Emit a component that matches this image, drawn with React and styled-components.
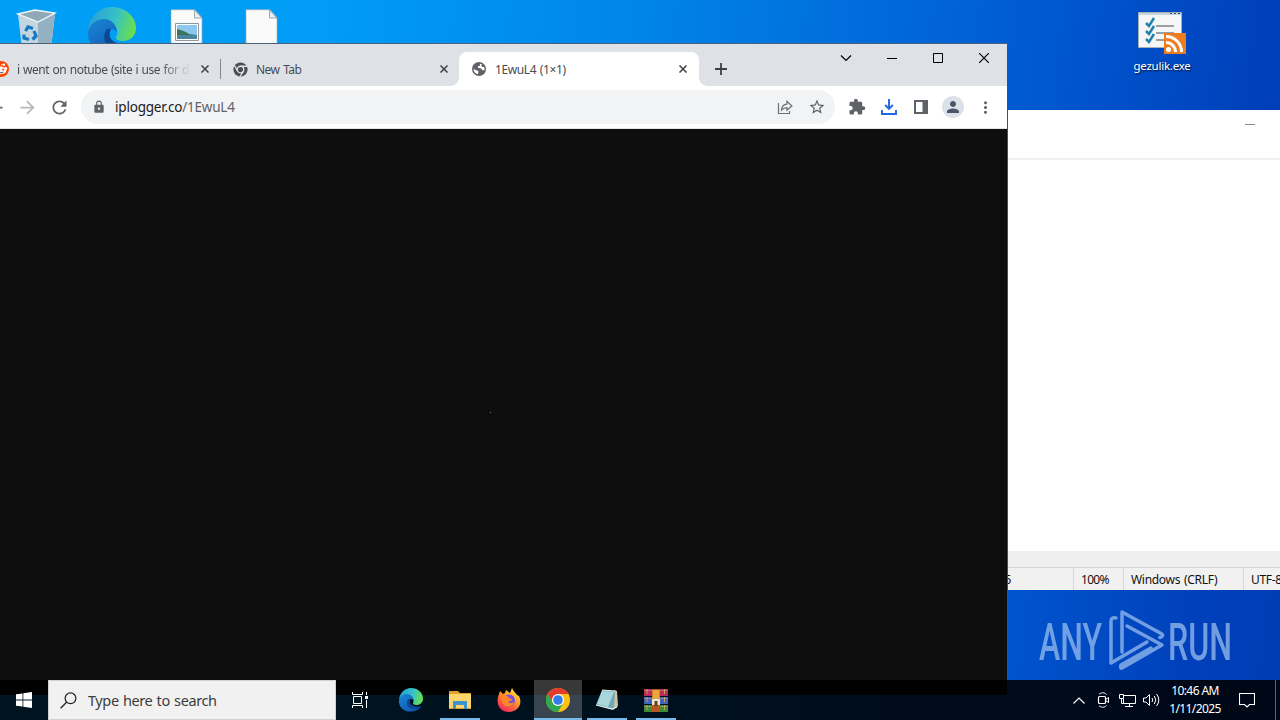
import React from 'react';
import styled, { createGlobalStyle } from 'styled-components';
import {
  MdArrowBack,
  MdArrowForward,
  MdExtension,
  MdLock,
  MdMoreVert,
  MdPerson,
  MdRefresh,
  MdStarBorder,
} from 'react-icons/md';

const uiFont = '"Noto Sans", "Open Sans", sans-serif';

const colors = {
  frame: '#dee1e6',
  toolbar: '#ffffff',
  omnibox: '#f1f3f4',
  icon: '#5f6368',
  text: '#484c51',
};

function App() {
  return (
    <>
      <GlobalStyle />
      <Desktop>
        <DesktopIcon $left={16}>
          <RecycleBinIcon />
        </DesktopIcon>
        <DesktopIcon $left={88} $top={7}>
          <EdgeIcon id="edge-desktop" size={48} />
        </DesktopIcon>
        <DesktopIcon $left={170}>
          <FileIcon hasImage />
        </DesktopIcon>
        <DesktopIcon $left={245}>
          <FileIcon />
        </DesktopIcon>
        <DesktopIcon $left={1122} $width={80}>
          <InstallerIcon />
          <DesktopLabel>gezulik.exe</DesktopLabel>
        </DesktopIcon>
        <Watermark>
          <AnyRunLogo />
        </Watermark>
        <Notepad />
        <Browser />
        <Taskbar />
      </Desktop>
    </>
  );
}

function Browser() {
  return (
    <BrowserWindow>
      <TabStrip>
        <Tab>
          <TabIcon>
            <RedditIcon />
          </TabIcon>
          <TabTitle $fade $spacing="-0.45px" $wordSpacing="0.7px">
            i went on notube (site i use for d
          </TabTitle>
          <CloseIcon />
        </Tab>
        <Tab $divider>
          <TabIcon>
            <ChromeMonoIcon />
          </TabIcon>
          <TabTitle $spacing="-0.55px" $wordSpacing="1.2px">
            New Tab
          </TabTitle>
          <CloseIcon />
        </Tab>
        <Tab $active>
          <TabIcon>
            <GlobeIcon />
          </TabIcon>
          <TabTitle $spacing="-0.4px" $wordSpacing="1px">
            1EwuL4 (1×1)
          </TabTitle>
          <CloseIcon />
        </Tab>
        <NewTab>
          <svg width="12" height="12" viewBox="0 0 12 12">
            <path d="M6 0v12M0 6h12" stroke="#3c4043" strokeWidth="1.8" />
          </svg>
        </NewTab>
        <WindowControls>
          <WindowControl>
            <svg width="12" height="12" viewBox="0 0 12 12">
              <path d="M1 3.500l5 5 5-5" fill="none" stroke="#000" strokeWidth="1.200" />
            </svg>
          </WindowControl>
          <WindowControl>
            <svg width="10" height="10" viewBox="0 0 10 10">
              <path d="M0 5.5h10" stroke="#000" />
            </svg>
          </WindowControl>
          <WindowControl>
            <svg width="10" height="10" viewBox="0 0 10 10">
              <path d="M.5.5h9v9h-9z" fill="none" stroke="#000" />
            </svg>
          </WindowControl>
          <WindowControl>
            <svg width="10" height="10" viewBox="0 0 10 10">
              <path d="M0 0l10 10M10 0L0 10" stroke="#000" strokeWidth="1.200" />
            </svg>
          </WindowControl>
        </WindowControls>
      </TabStrip>
      <Toolbar>
        <ToolButton>
          <MdArrowBack size={21} />
        </ToolButton>
        <ToolButton $disabled>
          <MdArrowForward size={21} />
        </ToolButton>
        <ToolButton>
          <MdRefresh size={21} />
        </ToolButton>
        <Omnibox>
          <MdLock size={14} />
          <Url>
            <b>iplogger.co</b>/1EwuL4
          </Url>
          <ToolButton>
            <svg width="16" height="16" viewBox="0 0 16 16">
              <path d="M1.5 4v10.500h11V12" fill="none" stroke="#6b6f74" strokeWidth="1.200" />
              <path
                d="M4.500 11c.3-3.800 2-5.600 5.400-5.800V2.400l5 4.600-5 4.300V8.600C7.500 8.600 6 9.300 4.500 11z"
                fill="none"
                stroke="#6b6f74"
                strokeWidth="1.200"
              />
            </svg>
          </ToolButton>
          <ToolButton>
            <MdStarBorder size={18} />
          </ToolButton>
        </Omnibox>
        <ToolButton>
          <MdExtension size={18} />
        </ToolButton>
        <ToolButton>
          <svg width="16" height="16" viewBox="0 0 16 16">
            <path
              d="M8 0v9.500M4.200 6L8 9.800 11.800 6M1 11v4h14v-4"
              fill="none"
              stroke="#2067e3"
              strokeWidth="1.900"
            />
          </svg>
        </ToolButton>
        <ToolButton>
          <svg width="14" height="14" viewBox="0 0 14 14">
            <path d="M0 0h14v14H0zM2 2v10h6.500V2z" fill={colors.icon} fillRule="evenodd" />
          </svg>
        </ToolButton>
        <ToolButton>
          <Avatar>
            <MdPerson size={18} />
          </Avatar>
        </ToolButton>
        <ToolButton>
          <MdMoreVert size={19} />
        </ToolButton>
      </Toolbar>
      <Page>
        <Pixel />
      </Page>
    </BrowserWindow>
  );
}

function Notepad() {
  return (
    <NotepadWindow>
      <NotepadTitle>
        <svg width="10" height="1">
          <path d="M0 .5h10" stroke="#8a8a8a" />
        </svg>
      </NotepadTitle>
      <NotepadBody />
      <ScrollTrack />
      <StatusBar>
        <StatusCell $width={166} $end>
          Ln 1, Col 5
        </StatusCell>
        <StatusCell $width={50} $spacing="-0.7px">
          100%
        </StatusCell>
        <StatusCell $width={120}>Windows (CRLF)</StatusCell>
        <StatusCell $width={90}>UTF-8</StatusCell>
      </StatusBar>
    </NotepadWindow>
  );
}

function Taskbar() {
  return (
    <Bar>
      <BarButton>
        <svg width="16" height="16" viewBox="0 0 16 16" fill="#fff">
          <path d="M0 2.300l6.500-.9v6.200H0zM7.300 1.300L16 0v7.600H7.300zM0 8.400h6.500v6.200L0 13.700zM7.300 8.400H16V16l-8.700-1.200z" />
        </svg>
      </BarButton>
      <Search>
        <svg width="17" height="17" viewBox="0 0 17 17">
          <circle cx="10.500" cy="6.300" r="5.400" fill="none" stroke="#222" strokeWidth="1.200" />
          <path d="M6.600 10.200L.6 16.200" stroke="#222" strokeWidth="1.300" />
        </svg>
        Type here to search
      </Search>
      <BarButton>
        <svg width="16" height="16" viewBox="0 0 16 16" fill="none" stroke="#fff">
          <path d="M.5 0v2.500h10V0M.5 16v-2.500h10V16M1.500 4.500h8v7h-8zM14.500 0v3M14.500 8v8" />
          <path d="M13 4h3v3h-3z" fill="#fff" stroke="none" />
        </svg>
      </BarButton>
      <BarButton $gap={3}>
        <EdgeIcon id="edge-bar" size={24} />
      </BarButton>
      <BarButton $gap={1} $running>
        <FolderIcon />
      </BarButton>
      <BarButton $gap={1}>
        <FirefoxIcon />
      </BarButton>
      <BarButton $gap={1} $running $focused>
        <ChromeIcon />
      </BarButton>
      <BarButton $gap={1} $running>
        <NotepadIcon />
      </BarButton>
      <BarButton $gap={1} $running>
        <WinrarIcon />
      </BarButton>
      <Tray>
        <TrayIcon>
          <svg width="12" height="7" viewBox="0 0 12 7">
            <path d="M.5 6.500L6 1l5.500 5.500" fill="none" stroke="#fff" strokeWidth="1.200" />
          </svg>
        </TrayIcon>
        <TrayIcon>
          <svg width="12" height="16" viewBox="0 0 12 16" fill="none" stroke="#fff">
            <path d="M2 2.500C4 .2 7.500.2 9.500 2.500M2 13.500c2 2.300 5.500 2.300 7.500 0" />
            <rect x="1.500" y="4.500" width="7" height="7" rx="1" strokeWidth="1.200" />
            <path d="M8.500 7.500l3-2v5l-3-2" />
          </svg>
        </TrayIcon>
        <TrayIcon>
          <svg width="17" height="15" viewBox="0 0 17 15" fill="none" stroke="#fff">
            <path d="M5 2.500h11.500v8H4.500V6M10.500 10.500v3M6 13.500h8" />
            <path d="M.5 1.500h4v4h-4zM2.500 5.500v5h2" />
          </svg>
        </TrayIcon>
        <TrayIcon>
          <svg width="17" height="14" viewBox="0 0 17 14" fill="none" stroke="#fff">
            <path d="M.5 5v4H3l3.500 3.500v-11L3 5zM9 5q1.500 2 0 4M11.300 3q3 4 0 8M13.600 1q4.500 6 0 12" />
          </svg>
        </TrayIcon>
        <Clock>
          <span>10:46 AM</span>
          <span>1/11/2025</span>
        </Clock>
        <Notifications>
          <svg width="16" height="16" viewBox="0 0 16 16">
            <path
              d="M.5 1.500h15v11H10.500L8 15l-2.500-2.500H.5z"
              fill="none"
              stroke="#fff"
              strokeWidth="1.100"
            />
          </svg>
        </Notifications>
      </Tray>
    </Bar>
  );
}

function CloseIcon() {
  return (
    <svg width="8" height="8" viewBox="0 0 8 8">
      <path d="M.5.5l7 7M7.500.5l-7 7" stroke="#3c4043" strokeWidth="1.500" />
    </svg>
  );
}

function GlobeIcon() {
  return (
    <svg width="14" height="14" viewBox="0 0 14 14">
      <circle cx="7" cy="7" r="7" fill={colors.icon} />
      <path
        d="M1.600 6.800l2.200 1.400 1.800.2.900 1.300-.6 2.600C3.100 11.800 1.400 9.500 1.600 6.800z"
        fill="#fff"
      />
      <path
        d="M8 1.700v1.700L6.200 4.300l-.4 1.500 3.100.5 1.300 1.800 2 .3c.4-1.100.4-2.400-.1-3.500L10.300 5 9.200 3.800 10 2.300z"
        fill="#fff"
      />
    </svg>
  );
}

function RedditIcon() {
  return (
    <svg width="16" height="16" viewBox="0 0 16 16">
      <circle cx="8" cy="8" r="8" fill="#ff4500" />
      <ellipse cx="8" cy="9.500" rx="5.400" ry="3.700" fill="#fff" />
      <circle cx="12.800" cy="7.500" r="1.400" fill="#fff" />
      <circle cx="11" cy="3.700" r="1.200" fill="#fff" />
      <path d="M8 6l.7-3 2 .6" fill="none" stroke="#fff" strokeWidth=".7" />
      <circle cx="5.800" cy="8.600" r="1.100" fill="#ff4500" />
      <circle cx="10.200" cy="8.600" r="1.100" fill="#ff4500" />
      <path d="M5.700 11.200q2.300 1.400 4.600 0" fill="none" stroke="#222" strokeWidth=".8" />
    </svg>
  );
}

function ChromeMonoIcon() {
  return (
    <svg width="15" height="15" viewBox="0 0 16 16">
      <circle cx="8" cy="8" r="7.600" fill="#4a4e55" />
      <circle cx="8" cy="8" r="3.500" fill="none" stroke={colors.frame} strokeWidth="1.400" />
      <path
        d="M8 4.500h7.300M5 9.800L1.400 3.500M11 9.800L7.300 16"
        fill="none"
        stroke={colors.frame}
        strokeWidth="1.400"
      />
    </svg>
  );
}

function ChromeIcon() {
  return (
    <svg width="24" height="24" viewBox="0 0 24 24">
      <circle cx="12" cy="12" r="12" fill="#fbc116" />
      <path d="M1.600 6A12 12 0 0 1 22.400 6H12L6.800 15z" fill="#e33b2e" />
      <path d="M1.600 6A12 12 0 0 0 12 24l5.200-9-5.200 3-5.200-3z" fill="#2da94f" />
      <circle cx="12" cy="12" r="6" fill="#fff" />
      <circle cx="12" cy="12" r="4.800" fill="#2f7de9" />
    </svg>
  );
}

function EdgeIcon({ id, size }) {
  return (
    <svg width={size} height={size} viewBox="0 0 48 48">
      <defs>
        <linearGradient id={`${id}-top`} x1="0" y1=".3" x2="1" y2=".5">
          <stop offset="0" stopColor="#2a9fd8" />
          <stop offset=".55" stopColor="#35c1c8" />
          <stop offset="1" stopColor="#6be04a" />
        </linearGradient>
        <linearGradient id={`${id}-side`} x1="0" y1="0" x2="1" y2="1">
          <stop offset="0" stopColor="#1b88d8" />
          <stop offset="1" stopColor="#0b4ca5" />
        </linearGradient>
      </defs>
      <path
        d="M0 24C1 10 11 0 24 0c14 0 24 10 24 21 0 8-6 13-13 13-5 0-8-2-7-4 3-4 1-13-8-15C11 13 3 17 0 24z"
        fill={`url(#${id}-top)`}
      />
      <path
        d="M0 25c2-8 8-13 16-13 8 0 13 7 13 13-2-3-6-4-9-2-6 5-2 17 9 18 6 1 11-1 16-5-4 7-12 11-21 11C10 48-1 38 0 25z"
        fill={`url(#${id}-side)`}
      />
      <path d="M19 22c-6 8-2 19 9 20 6 1 11-1 16-5-9 1-19 0-22-7-1-3 0-6 1-8z" fill="#0c4796" />
    </svg>
  );
}

function RecycleBinIcon() {
  return (
    <svg width="42" height="48" viewBox="0 0 42 48">
      <path d="M2 5l10 43h22l5-43-17 8z" fill="#b3cddd" />
      <path d="M2 5l5 43h16l-1-35z" fill="#c3d5df" />
      <path d="M22 13l17-8-5 43H22z" fill="#94b1c2" />
      <path d="M2 5l17-4 20 3-17 9z" fill="#8fa9b6" stroke="#eff8fc" strokeWidth="1.300" />
      <g fill="none" stroke="#1579c8" strokeWidth="3.200">
        <path d="M9.500 22l2.500-4 5 1.500M18 22l2 5-3.500 3.500M13 30.500l-5-1.500v-3.500" />
      </g>
    </svg>
  );
}

function FileIcon({ hasImage }) {
  return (
    <svg width="33" height="44" viewBox="0 0 33 44">
      <path d="M1 .8h24l7 8v36H1z" fill="#fafafa" stroke="#a9a9a9" strokeWidth=".6" />
      <path d="M24.500 1v8H32z" fill="#e8eef1" stroke="#8b989f" strokeWidth=".8" />
      {hasImage && (
        <>
          <path d="M5.500 14.500h23v17h-23z" fill="#fff" stroke="#8b98a0" />
          <path d="M7 16h20v14H7z" fill="#8ec7ee" />
          <path d="M7 20q8 2 12 5l8 1v4H7z" fill="#39765b" />
          <path d="M7 26h20v4H7z" fill="#4b83a3" />
        </>
      )}
    </svg>
  );
}

function InstallerIcon() {
  return (
    <svg width="48" height="44" viewBox="0 0 48 44">
      <path d="M.5 2.500h43v35H.5z" fill="#f5f6f6" stroke="#a6b1b8" />
      <path d="M1 3h42v2H1z" fill="#c6d5df" />
      <path d="M32 3.500h2M36 3.500h2M40 3.500h2" stroke="#334a60" />
      <path d="M18 16h18M18 23h18M18 30h10" stroke="#7b848b" strokeWidth="1.500" />
      <path
        d="M8 13l3 3 5-8M8 21l3 3 5-8M8 29l3 3 5-8"
        fill="none"
        stroke="#2382ad"
        strokeWidth="2.500"
      />
      <path d="M26 23h22v21H26z" fill="#ee7d20" />
      <circle cx="30.500" cy="39.500" r="2.500" fill="#fff" />
      <path
        d="M28 32.500a9.500 9.500 0 0 1 9.500 9.500M28 26.500a15.500 15.500 0 0 1 15.500 15.500"
        fill="none"
        stroke="#fff"
        strokeWidth="3"
      />
    </svg>
  );
}

function FolderIcon() {
  return (
    <svg width="22" height="19" viewBox="0 0 22 19">
      <path d="M0 0h9l2 2h11v16H0z" fill="#e0a02e" />
      <path d="M1 3h21v14H0V3z" fill="#fbd66c" />
      <path d="M4 10h14v8h-3v-4H7v4H4z" fill="#3d94cb" />
      <path d="M7 14h8v3H7z" fill="#fbd66c" />
    </svg>
  );
}

function FirefoxIcon() {
  return (
    <svg width="24" height="24" viewBox="0 0 24 24">
      <defs>
        <linearGradient id="fox" x1=".8" y1="0" x2=".2" y2="1">
          <stop offset="0" stopColor="#fff044" />
          <stop offset=".45" stopColor="#ff9124" />
          <stop offset="1" stopColor="#f31c67" />
        </linearGradient>
      </defs>
      <path
        d="M2 6l1-3 3 3 2-1 1-3 4 3 2-5c1 3 4 5 5 7l2 1c4 8-1 16-10 16S-2 16 2 6z"
        fill="url(#fox)"
      />
      <circle cx="12" cy="12.500" r="6" fill="#7651dc" />
      <path d="M5 8c4-1 6 0 7 2l3 1c0 2-3 2-4 3 2 2 5 1 6 0-1 5-8 6-11 2-2-3-1-6-1-8z" fill="#ff8624" />
    </svg>
  );
}

function NotepadIcon() {
  return (
    <svg width="24" height="24" viewBox="0 0 24 24">
      <path d="M19 2l3 1 1 15-4 3z" fill="#cfc5a4" />
      <path d="M7 2l13 1-1 19L1 17z" fill="#6fa9b5" />
      <path d="M7 3l12 1-6 15-11-3z" fill="#a9d6dc" />
      <path d="M7 2l13 1M1 17l16 4 5-2" fill="none" stroke="#e6eeec" strokeWidth="1.200" />
    </svg>
  );
}

function WinrarIcon() {
  return (
    <svg width="24" height="23" viewBox="0 0 24 23">
      <path d="M0 0h24v7H0z" fill="#b52d58" />
      <path d="M0 8h24v7H0z" fill="#4263bc" />
      <path d="M0 16h24v7H0z" fill="#398d36" />
      <path d="M0 1.500h24M0 9.500h24M0 17.500h24" stroke="#d8a0a8" strokeOpacity=".6" strokeWidth=".8" />
      <path d="M3 0v23M20.500 0v23" stroke="#c9a04f" strokeWidth="1" strokeDasharray="5 3" />
      <path d="M8 0h8v23H8z" fill="#b8541f" />
      <path d="M8.500 1h7v10h-7z" fill="#e8a83c" />
      <path d="M8 10h8v6H8z" fill="#eee5d1" />
      <path d="M10.500 12h3v5h-3z" fill="#62421f" />
    </svg>
  );
}

function AnyRunLogo() {
  return (
    <svg width="196" height="64" viewBox="0 0 196 64">
      <g fill="#8fb5ec" fontFamily="Roboto, sans-serif" fontSize="52" fontWeight="500">
        <text x="1" y="50.500" textLength="63" lengthAdjust="spacingAndGlyphs">
          ANY
        </text>
        <text x="130" y="50.500" textLength="64" lengthAdjust="spacingAndGlyphs">
          RUN
        </text>
      </g>
      <g fill="none" stroke="#8fb5ec" strokeWidth="3.500" strokeLinejoin="round" strokeLinecap="round">
        <path d="M84 43V3l40 22q2 2-2 3.500" />
        <path d="M78 9q-5-1-5 3v42l36-21" />
        <path d="M89 17l35 19-40 23q-2 1-1-3l30-17" />
      </g>
    </svg>
  );
}

const GlobalStyle = createGlobalStyle`
  *, *::before, *::after {
    box-sizing: border-box;
  }

  body {
    margin: 0;
    overflow: hidden;
    font-family: ${uiFont};
  }

  svg {
    display: block;
    flex-shrink: 0;
  }
`;

const Desktop = styled.div`
  position: relative;
  width: 1280px;
  height: 720px;
  overflow: hidden;
  background: linear-gradient(
    97deg,
    #009ff6 0%,
    #009cf5 24%,
    #0086e8 46%,
    #0068da 66%,
    #0052cb 81%,
    #0040ba 93%,
    #003cb4 100%
  );
`;

const DesktopIcon = styled.div`
  position: absolute;
  left: ${(p) => p.$left}px;
  top: ${(p) => p.$top || (p.$width ? 10 : 9)}px;
  width: ${(p) => (p.$width ? `${p.$width}px` : 'auto')};
  display: flex;
  flex-direction: column;
  align-items: center;
`;

const DesktopLabel = styled.div`
  margin-top: 3px;
  color: #fff;
  font-size: 11.5px;
  line-height: 17px;
  letter-spacing: -0.25px;
  text-shadow: 1px 1px 2px rgba(0, 0, 0, 0.8);
`;

const Watermark = styled.div`
  position: absolute;
  left: 1038px;
  top: 609px;
  opacity: 0.8;
`;

const BrowserWindow = styled.div`
  position: absolute;
  left: -27px;
  top: 43px;
  width: 1035px;
  height: 652px;
  display: flex;
  flex-direction: column;
  border-top: 1px solid #48617c;
  border-right: 1px solid #4a4d52;
  background: #0e0e0e;
`;

const TabStrip = styled.div`
  display: flex;
  height: 42px;
  padding: 8px 0 0 8px;
  background: ${colors.frame};
`;

const Tab = styled.div`
  position: relative;
  display: flex;
  align-items: center;
  width: ${(p) => (p.$active ? 240 : 239)}px;
  height: 34px;
  padding: 0 ${(p) => (p.$active ? 12 : 11)}px 0 12px;
  border-radius: 8px 8px 0 0;
  background: ${(p) => (p.$active ? colors.toolbar : 'transparent')};

  &::before {
    content: '';
    display: ${(p) => (p.$divider ? 'block' : 'none')};
    position: absolute;
    left: 0;
    top: 7px;
    width: 1px;
    height: 20px;
    background: #85898f;
  }

  ${(p) =>
    p.$active &&
    `
    &::before, &::after {
      content: '';
      display: block;
      position: absolute;
      left: -8px;
      top: auto;
      bottom: 0;
      width: 8px;
      height: 8px;
      background: radial-gradient(circle at 0 0, transparent 7.5px, ${colors.toolbar} 8px);
    }
    &::after {
      left: auto;
      right: -8px;
      background: radial-gradient(circle at 100% 0, transparent 7.5px, ${colors.toolbar} 8px);
    }
  `}
`;

const TabIcon = styled.div`
  display: flex;
  width: 16px;
  height: 16px;
  align-items: center;
  justify-content: center;
`;

const TabTitle = styled.div`
  flex: 1;
  min-width: 0;
  margin: 0 10px 0 8px;
  white-space: nowrap;
  color: ${colors.text};
  font-size: 12px;
  letter-spacing: ${(p) => p.$spacing};
  word-spacing: ${(p) => p.$wordSpacing};
  mask-image: ${(p) => (p.$fade ? 'linear-gradient(to right, #000 82%, transparent)' : 'none')};
`;

const NewTab = styled.div`
  display: flex;
  align-items: center;
  padding-left: 16px;
  height: 34px;
`;

const WindowControls = styled.div`
  display: flex;
  height: 28px;
  margin: -8px 0 0 auto;
`;

const WindowControl = styled.div`
  width: 46px;
  display: flex;
  align-items: center;
  justify-content: center;
`;

const Toolbar = styled.div`
  display: flex;
  align-items: center;
  height: 43px;
  padding: 0 6px;
  background: ${colors.toolbar};
  border-bottom: 1px solid #e3e5e8;
`;

const ToolButton = styled.div`
  display: flex;
  align-items: center;
  justify-content: center;
  width: 32px;
  height: 32px;
  color: ${(p) => (p.$disabled ? '#b6b8ba' : colors.icon)};
`;

const Omnibox = styled.div`
  display: flex;
  align-items: center;
  flex: 1;
  height: 34px;
  margin: 0 6px;
  padding: 0 2px 0 11px;
  border-radius: 17px;
  background: ${colors.omnibox};
  color: ${colors.icon};
`;

const Url = styled.div`
  flex: 1;
  margin-left: 9px;
  font-size: 13.5px;
  letter-spacing: -0.2px;

  b {
    color: #202124;
    font-weight: 400;
  }
`;

const Avatar = styled.div`
  display: flex;
  align-items: center;
  justify-content: center;
  width: 22px;
  height: 22px;
  border-radius: 50%;
  background: #dce1e9;
  color: #4b5568;
`;

const Page = styled.div`
  flex: 1;
  display: flex;
  align-items: center;
  justify-content: center;
`;

const Pixel = styled.div`
  width: 1px;
  height: 1px;
  background: #777;
`;

const NotepadWindow = styled.div`
  position: absolute;
  left: 907px;
  top: 110px;
  width: 520px;
  height: 480px;
  display: flex;
  flex-direction: column;
  background: #fff;
`;

const NotepadTitle = styled.div`
  height: 50px;
  padding: 14px 0 0 338px;
  border-bottom: 2px solid #f0f0f0;
`;

const NotepadBody = styled.div`
  flex: 1;
`;

const ScrollTrack = styled.div`
  height: 16px;
  background: #efefef;
`;

const StatusBar = styled.div`
  display: flex;
  height: 23px;
  border-top: 1px solid #d7d7d7;
  background: #f1f1f1;
`;

const StatusCell = styled.div`
  display: flex;
  align-items: center;
  justify-content: ${(p) => (p.$end ? 'flex-end' : 'flex-start')};
  width: ${(p) => p.$width + (p.$end ? 1 : 0)}px;
  padding: ${(p) => (p.$end ? '0 62px 0 0' : '0 0 0 7px')};
  border-right: 1px solid #d7d7d7;
  color: #111;
  font-size: 12px;
  letter-spacing: ${(p) => p.$spacing || '-0.3px'};
  word-spacing: 1px;
  white-space: nowrap;
`;

const Bar = styled.div`
  position: absolute;
  left: 0;
  bottom: 0;
  width: 100%;
  height: 40px;
  display: flex;
  background: rgba(0, 0, 0, 0.87);
`;

const BarButton = styled.div`
  position: relative;
  width: 48px;
  margin-left: ${(p) => p.$gap || 0}px;
  display: flex;
  align-items: center;
  justify-content: center;
  background: ${(p) => (p.$focused ? 'rgba(255, 255, 255, 0.22)' : 'transparent')};

  &::after {
    content: '';
    display: ${(p) => (p.$running ? 'block' : 'none')};
    position: absolute;
    left: ${(p) => (p.$focused ? 0 : 4)}px;
    right: ${(p) => (p.$focused ? 0 : 4)}px;
    bottom: 0;
    height: 2px;
    background: #76b9ed;
  }
`;

const Search = styled.div`
  width: 288px;
  display: flex;
  align-items: center;
  gap: 11px;
  padding-left: 11px;
  border: 1px solid #d0d0d0;
  background: #f1f1f1;
  color: #3c3c3c;
  font-size: 14.5px;
  letter-spacing: -0.4px;
  word-spacing: 0.9px;
`;

const Tray = styled.div`
  display: flex;
  align-items: center;
  margin-left: auto;
  color: #fff;
`;

const TrayIcon = styled.div`
  width: 24px;
  display: flex;
  justify-content: center;
`;

const Clock = styled.div`
  width: 64px;
  display: flex;
  flex-direction: column;
  align-items: center;
  font-size: 12px;
  line-height: 18px;
  letter-spacing: -0.6px;
`;

const Notifications = styled.div`
  width: 49px;
  height: 40px;
  display: flex;
  align-items: center;
  padding-left: 12px;
  margin-right: 4px;
  border-right: 1px solid #596271;
`;

export default App;
